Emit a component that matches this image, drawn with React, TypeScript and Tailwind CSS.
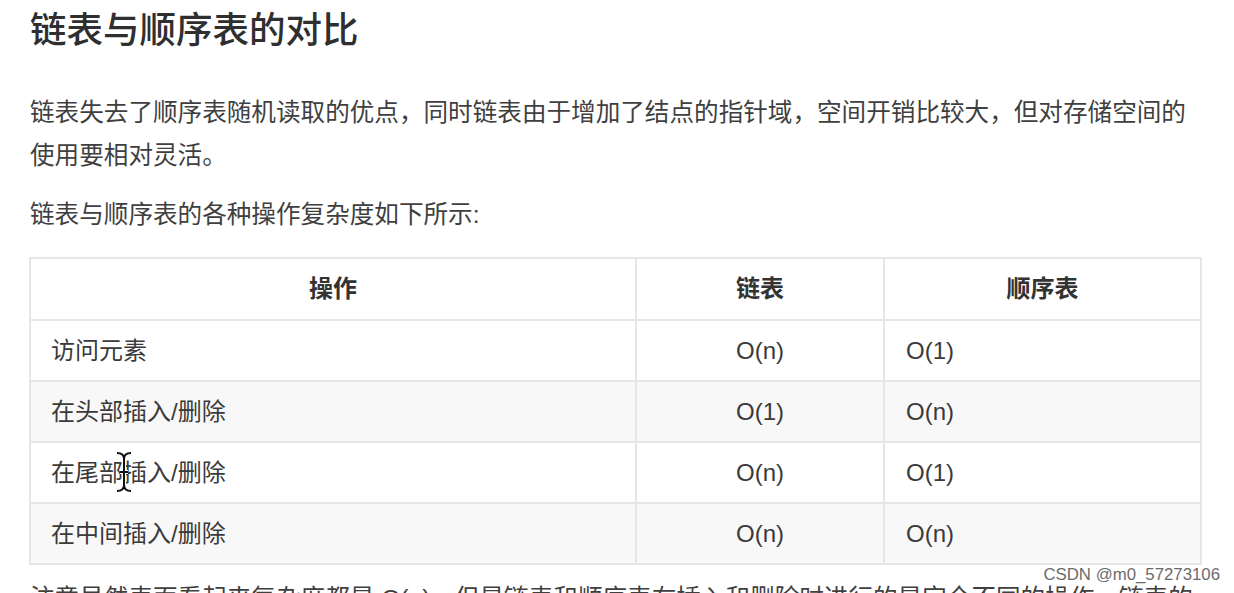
import React from 'react';

const rows = [
  { op: '访问元素', list: 'O(n)', seq: 'O(1)' },
  { op: '在头部插入/删除', list: 'O(1)', seq: 'O(n)' },
  { op: '在尾部插入/删除', list: 'O(n)', seq: 'O(1)' },
  { op: '在中间插入/删除', list: 'O(n)', seq: 'O(n)' },
];

const font = "font-['Liberation_Sans','Noto_Sans_CJK_SC',sans-serif]";

const App = () => {
  return (
    <div className={`relative h-[593px] w-[1234px] overflow-hidden bg-white ${font}`}>
      <div className="pl-[30px] pt-[6px]">
        <h1 className="text-[36.5px] font-medium leading-[50px] text-[#2f2f2f]">链表与顺序表的对比</h1>

        <p className="mt-[35px] w-[1172px] text-[24.6px] leading-[43px] text-[#3f3f3f]">
          链表失去了顺序表随机读取的优点，同时链表由于增加了结点的指针域，空间开销比较大，但对存储空间的使用要相对灵活。
        </p>

        <p className="mt-[16px] text-[24.6px] leading-[43px] text-[#3f3f3f]">链表与顺序表的各种操作复杂度如下所示:</p>

        <table className="ml-[-1px] mt-[21px] w-[1171px] table-fixed border-collapse text-[24px] text-[#3a3a3a]">
          <colgroup>
            <col className="w-[606px]" />
            <col className="w-[248px]" />
            <col className="w-[317px]" />
          </colgroup>
          <thead>
            <tr className="h-[62px] bg-white">
              <th className="border-2 border-[#e6e6e6] text-center font-semibold text-[#333]">操作</th>
              <th className="border-2 border-[#e6e6e6] text-center font-semibold text-[#333]">链表</th>
              <th className="border-2 border-[#e6e6e6] text-center font-semibold text-[#333]">顺序表</th>
            </tr>
          </thead>
          <tbody>
            {rows.map((r, i) => (
              <tr key={r.op} className={`h-[61px] ${i % 2 === 1 ? 'bg-[#f8f8f8]' : 'bg-white'}`}>
                <td className="border-2 border-[#e6e6e6] pl-[20px]">{r.op}</td>
                <td className="border-2 border-[#e6e6e6] text-center">{r.list}</td>
                <td className="border-2 border-[#e6e6e6] pl-[21px]">{r.seq}</td>
              </tr>
            ))}
          </tbody>
        </table>

        <p className="mt-[12px] w-[1172px] text-[24.6px] leading-[43px] text-[#3f3f3f]">
          注意虽然表面看起来复杂度都是 O(n)，但是链表和顺序表在插入和删除时进行的是完全不同的操作。链表的主要耗时操作是遍历查找，删除和插入操作本身的复杂度是O(1)。
        </p>
      </div>

      {/* mouse text cursor */}
      <svg className="absolute left-[115px] top-[451px]" width="18" height="42" viewBox="0 0 18 42">
        <path d="M2 2 Q9 2 9 8 L9 34 Q9 40 2 40 M16 2 Q9 2 9 8 M9 34 Q9 40 16 40 M5 21 L13 21" fill="none" stroke="#fff" strokeWidth="4" />
        <path d="M2 2 Q9 2 9 8 L9 34 Q9 40 2 40 M16 2 Q9 2 9 8 M9 34 Q9 40 16 40 M5 21 L13 21" fill="none" stroke="#111" strokeWidth="2" />
      </svg>

      <div className="absolute right-[14px] top-[564px] font-['Liberation_Sans',sans-serif] text-[16.8px] leading-[22px] text-[#6b6b6b]">
        CSDN @m0_57273106
      </div>
    </div>
  );
};

export default App;
